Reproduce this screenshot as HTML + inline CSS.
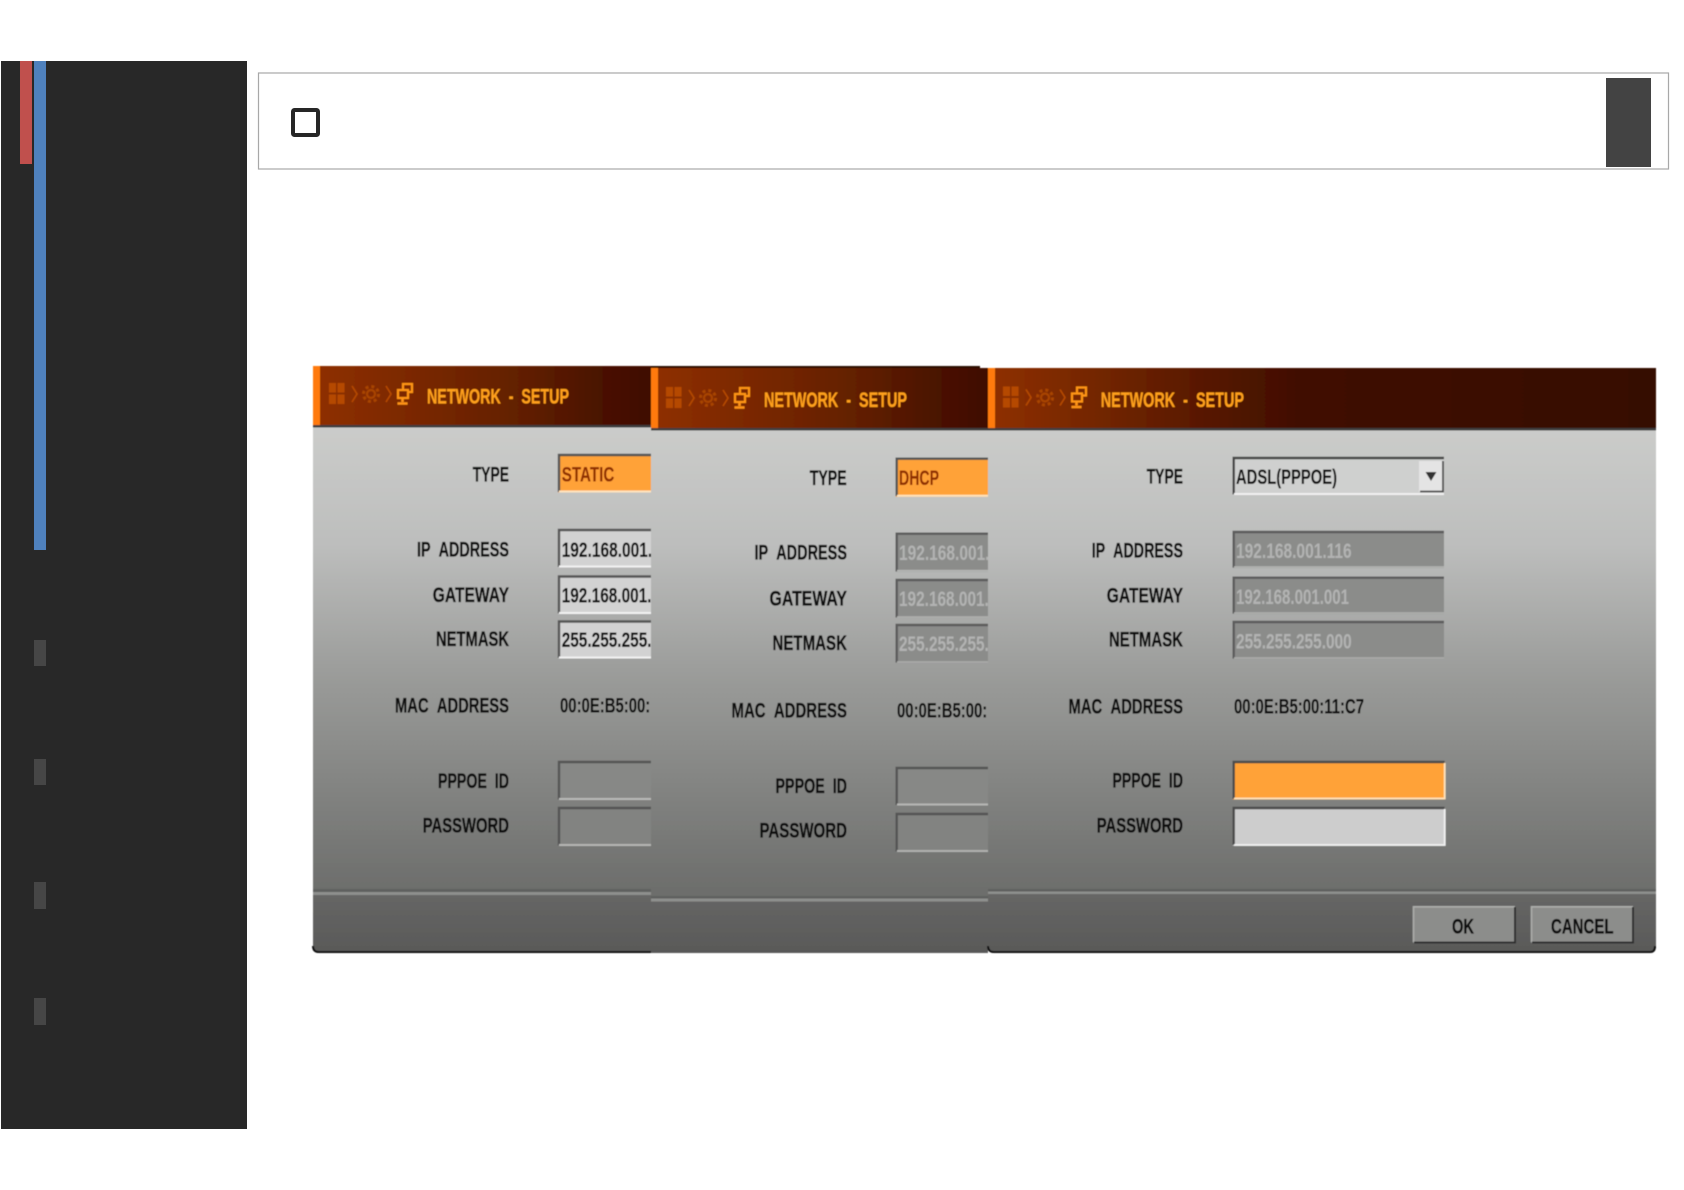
<!DOCTYPE html>
<html>
<head>
<meta charset="utf-8">
<style>
html,body{margin:0;padding:0;background:#fff;width:1684px;height:1190px;overflow:hidden}
svg{display:block;position:absolute;left:0;top:0}
text{font-family:"Liberation Sans",sans-serif;font-weight:700;font-size:21px;fill:#0c0c0c;stroke:#0c0c0c;stroke-width:.3}
.t{fill:#ffa01e;stroke:#ffa01e;stroke-width:.15}
.d{fill:#b2b3b2;stroke:none}
.v{stroke-width:.1}
.o{fill:#8f2f06;stroke:#8f2f06;stroke-width:.1}
</style>
</head>
<body>
<svg width="1684" height="1190" viewBox="0 0 1684 1190" xmlns="http://www.w3.org/2000/svg">
<defs>
<linearGradient id="h" gradientUnits="userSpaceOnUse" x1="313" y1="0" x2="651" y2="0">
<stop offset="0" stop-color="#8f3000"/><stop offset=".3" stop-color="#7a2800"/><stop offset=".6" stop-color="#632000"/><stop offset=".85" stop-color="#4a1200"/><stop offset="1" stop-color="#3f0d00"/>
</linearGradient>
<linearGradient id="h3" gradientUnits="userSpaceOnUse" x1="988" y1="0" x2="1656" y2="0">
<stop offset="0" stop-color="#8f3000"/><stop offset=".17" stop-color="#722600"/><stop offset=".32" stop-color="#581800"/><stop offset=".47" stop-color="#400e00"/><stop offset="1" stop-color="#360b00"/>
</linearGradient>
<linearGradient id="b" gradientUnits="userSpaceOnUse" x1="0" y1="428" x2="0" y2="890">
<stop offset="0" stop-color="#cbccca"/><stop offset=".25" stop-color="#bdbebd"/><stop offset=".55" stop-color="#999a98"/><stop offset="1" stop-color="#6d6e6c"/>
</linearGradient>
<linearGradient id="f" gradientUnits="userSpaceOnUse" x1="0" y1="892" x2="0" y2="953">
<stop offset="0" stop-color="#676766"/><stop offset="1" stop-color="#595958"/>
</linearGradient>
<filter id="s" x="-2%" y="-2%" width="104%" height="104%"><feGaussianBlur stdDeviation=".5"/></filter>
<g id="ic">
<g fill="#b54a04">
<rect x="329" y="383" width="7" height="9.5"/><rect x="337.5" y="383" width="7" height="9.5"/>
<rect x="329" y="394.5" width="7" height="9.5"/><rect x="337.5" y="394.5" width="7" height="9.5"/>
</g>
<path d="M352 386l5 8-5 8M386 386l5 8-5 8" fill="none" stroke="#b54a04" stroke-width="1.6"/>
<circle cx="371" cy="394" r="4" fill="none" stroke="#a84404" stroke-width="2.2"/>
<circle cx="371" cy="394" r="7.5" fill="none" stroke="#a84404" stroke-width="3" stroke-dasharray="3 2.9"/>
<g fill="none" stroke="#ff9412" stroke-width="2.2">
<rect x="403" y="384" width="9" height="8"/>
<rect x="398" y="390" width="10" height="8" fill="#7a2800"/>
</g>
<path d="M402.5 398v4M397.5 403.5h10" stroke="#ff9412" stroke-width="2.6" fill="none"/>
</g>
</defs>

<!-- sidebar -->
<rect x="1" y="61" width="246" height="1068" fill="#282828"/>
<rect x="20" y="61" width="12" height="103" fill="#c0504d"/>
<rect x="34" y="61" width="12" height="489" fill="#4f81bd"/>
<rect x="34" y="640" width="12" height="26" fill="#464646"/>
<rect x="34" y="759" width="12" height="26" fill="#464646"/>
<rect x="34" y="882" width="12" height="27" fill="#464646"/>
<rect x="34" y="998" width="12" height="27" fill="#464646"/>

<!-- top box -->
<rect x="258.5" y="73" width="1410" height="96" fill="#fff" stroke="#a8a8a8" stroke-width="1.2"/>
<rect x="293" y="110" width="25" height="25" rx="1.5" fill="#fff" stroke="#262626" stroke-width="4"/>
<rect x="1606" y="78" width="45" height="89" fill="#434343"/>

<g filter="url(#s)">
<!-- PANEL 1 -->
<path d="M313 366H651V953H319Q313 953 313 947Z" fill="url(#b)"/>
<rect x="313" y="366" width="338" height="59" fill="url(#h)"/>
<rect x="313" y="366" width="7" height="59" fill="#ff7a08"/>
<rect x="313" y="425" width="338" height="2.5" fill="#3c3c3c"/>
<use href="#ic"/>
<text class="t" x="427" y="403.5" textLength="142" lengthAdjust="spacingAndGlyphs">NETWORK&#160;&#160;-&#160;&#160;SETUP</text>
<rect x="313" y="889" width="338" height="3" fill="#5f605e"/>
<rect x="313" y="892" width="338" height="3" fill="#8e8f8d"/>
<path d="M313 895H651V951H319Q313 951 313 945Z" fill="url(#f)"/>
<path d="M313 946Q313 952 319 952H651" fill="none" stroke="#111" stroke-width="2"/>
<text x="472.7" y="481.5" textLength="36.3" lengthAdjust="spacingAndGlyphs">TYPE</text>
<text x="417" y="556.5" textLength="92" lengthAdjust="spacingAndGlyphs">IP&#160;&#160;ADDRESS</text>
<text x="432.7" y="601.8" textLength="76.3" lengthAdjust="spacingAndGlyphs">GATEWAY</text>
<text x="436" y="646.2" textLength="73" lengthAdjust="spacingAndGlyphs">NETMASK</text>
<text x="395" y="712.5" textLength="114" lengthAdjust="spacingAndGlyphs">MAC&#160;&#160;ADDRESS</text>
<text x="438" y="788.2" textLength="71" lengthAdjust="spacingAndGlyphs">PPPOE&#160;&#160;ID</text>
<text x="422.7" y="832.5" textLength="86.3" lengthAdjust="spacingAndGlyphs">PASSWORD</text>
<rect x="558" y="454" width="93" height="38.5" fill="#ffa239"/>
<path d="M559 492V455H651" fill="none" stroke="#555" stroke-width="2.4"/><path d="M559 491.5H651" stroke="#ffe4bd" stroke-width="2"/>
<text class="o" x="561.7" y="481.5" textLength="52.6" lengthAdjust="spacingAndGlyphs">STATIC</text>
<rect x="558" y="529" width="93" height="38.5" fill="#d2d2d2"/>
<path d="M559 567V530H651" fill="none" stroke="#555" stroke-width="2.4"/><path d="M559 566.5H651" stroke="#f2f2f2" stroke-width="2"/>
<rect x="558" y="575.5" width="93" height="38.5" fill="#d2d2d2"/>
<path d="M559 613.5V576.5H651" fill="none" stroke="#555" stroke-width="2.4"/><path d="M559 613H651" stroke="#f2f2f2" stroke-width="2"/>
<rect x="558" y="620.5" width="93" height="38" fill="#d2d2d2"/>
<path d="M559 658V621.5H651" fill="none" stroke="#555" stroke-width="2.4"/><path d="M559 657.5H651" stroke="#f2f2f2" stroke-width="2"/>
<text class="v" x="561.7" y="557" textLength="115.5" lengthAdjust="spacingAndGlyphs">192.168.001.116</text>
<text class="v" x="561.7" y="602.5" textLength="115.5" lengthAdjust="spacingAndGlyphs">192.168.001.001</text>
<text class="v" x="561.7" y="647" textLength="115.5" lengthAdjust="spacingAndGlyphs">255.255.255.000</text>
<text class="v" x="560" y="712.5" textLength="130" lengthAdjust="spacingAndGlyphs">00:0E:B5:00:11:C7</text>
<rect x="558" y="761" width="93" height="39" fill="#878886"/>
<path d="M559 799.5V762H651" fill="none" stroke="#555" stroke-width="2.4"/><path d="M559 799H651" stroke="#b9bab8" stroke-width="2"/>
<rect x="558" y="807" width="93" height="39" fill="#828381"/>
<path d="M559 845.5V808H651" fill="none" stroke="#555" stroke-width="2.4"/><path d="M559 845H651" stroke="#b5b6b4" stroke-width="2"/>

<!-- PANEL 2 -->
<rect x="651" y="366" width="329" height="2" fill="#2a0800"/>
<rect x="651" y="368" width="337" height="585" fill="url(#b)"/>
<g transform="translate(338 0)"><rect x="313" y="368" width="337" height="60" fill="url(#h)"/></g>
<rect x="651" y="368" width="7" height="60" fill="#ff7a08"/>
<rect x="651" y="428" width="337" height="2.5" fill="#3c3c3c"/>
<use href="#ic" transform="translate(337 4)"/>
<text class="t" x="764" y="407" textLength="143" lengthAdjust="spacingAndGlyphs">NETWORK&#160;&#160;-&#160;&#160;SETUP</text>
<rect x="651" y="896" width="337" height="2.5" fill="#5f605e"/>
<rect x="651" y="898.5" width="337" height="3" fill="#8e8f8d"/>
<rect x="651" y="901.5" width="337" height="51.5" fill="url(#f)"/>
<text x="809.7" y="485" textLength="37" lengthAdjust="spacingAndGlyphs">TYPE</text>
<text x="754.5" y="559.5" textLength="92.5" lengthAdjust="spacingAndGlyphs">IP&#160;&#160;ADDRESS</text>
<text x="769.5" y="605.5" textLength="77.5" lengthAdjust="spacingAndGlyphs">GATEWAY</text>
<text x="772.5" y="650" textLength="74.5" lengthAdjust="spacingAndGlyphs">NETMASK</text>
<text x="731.5" y="717.5" textLength="115.5" lengthAdjust="spacingAndGlyphs">MAC&#160;&#160;ADDRESS</text>
<text x="775.5" y="793" textLength="71.5" lengthAdjust="spacingAndGlyphs">PPPOE&#160;&#160;ID</text>
<text x="759.5" y="837.5" textLength="87.5" lengthAdjust="spacingAndGlyphs">PASSWORD</text>
<rect x="895.7" y="457.7" width="92.3" height="39" fill="#ffa239"/>
<path d="M896.7 496V458.7H988" fill="none" stroke="#555" stroke-width="2.4"/><path d="M897 495.7H988" stroke="#ffe4bd" stroke-width="2"/>
<text class="o" x="899" y="485" textLength="40" lengthAdjust="spacingAndGlyphs">DHCP</text>
<rect x="895.7" y="532.7" width="92.3" height="39" fill="#8b8c8a"/>
<path d="M896.7 571.5V533.7H988" fill="none" stroke="#5c5c5c" stroke-width="2.4"/><path d="M897 570.7H988" stroke="#b5b6b4" stroke-width="1.6"/>
<rect x="895.7" y="579" width="92.3" height="38.7" fill="#8b8c8a"/>
<path d="M896.7 617.5V580H988" fill="none" stroke="#5c5c5c" stroke-width="2.4"/><path d="M897 617H988" stroke="#b0b1af" stroke-width="1.6"/>
<rect x="895.7" y="624" width="92.3" height="39" fill="#8b8c8a"/>
<path d="M896.7 662.5V625H988" fill="none" stroke="#5c5c5c" stroke-width="2.4"/><path d="M897 662H988" stroke="#adaeac" stroke-width="1.6"/>
<text class="d" x="899" y="560" textLength="115.5" lengthAdjust="spacingAndGlyphs">192.168.001.116</text>
<text class="d" x="899" y="606" textLength="115.5" lengthAdjust="spacingAndGlyphs">192.168.001.001</text>
<text class="d" x="899" y="651" textLength="115.5" lengthAdjust="spacingAndGlyphs">255.255.255.000</text>
<text class="v" x="897" y="717.5" textLength="130" lengthAdjust="spacingAndGlyphs">00:0E:B5:00:11:C7</text>
<rect x="895.7" y="767" width="92.3" height="38.5" fill="#878886"/>
<path d="M896.7 805V768H988" fill="none" stroke="#555" stroke-width="2.4"/><path d="M897 804.5H988" stroke="#b5b6b4" stroke-width="2"/>
<rect x="895.7" y="813" width="92.3" height="39" fill="#828381"/>
<path d="M896.7 851.5V814H988" fill="none" stroke="#555" stroke-width="2.4"/><path d="M897 851H988" stroke="#b0b1af" stroke-width="2"/>

<!-- PANEL 3 -->
<path d="M988 368H1656V947Q1656 953 1650 953H994Q988 953 988 947Z" fill="url(#b)"/>
<rect x="988" y="368" width="668" height="60" fill="url(#h3)"/>
<rect x="988" y="368" width="7" height="60" fill="#ff7a08"/>
<rect x="988" y="428" width="668" height="2.5" fill="#3c3c3c"/>
<use href="#ic" transform="translate(674 3.5)"/>
<text class="t" x="1100.7" y="407" textLength="143.3" lengthAdjust="spacingAndGlyphs">NETWORK&#160;&#160;-&#160;&#160;SETUP</text>
<rect x="988" y="889" width="668" height="2.5" fill="#5f605e"/>
<rect x="988" y="891.5" width="668" height="2.5" fill="#8e8f8d"/>
<path d="M988 894H1656V945Q1656 951 1650 951H994Q988 951 988 945Z" fill="url(#f)"/>
<path d="M988 946Q988 952 994 952H1650Q1655 952 1655 946" fill="none" stroke="#111" stroke-width="2"/>
<text x="1146.7" y="483.5" textLength="36.3" lengthAdjust="spacingAndGlyphs">TYPE</text>
<text x="1091.7" y="557.5" textLength="91.3" lengthAdjust="spacingAndGlyphs">IP&#160;&#160;ADDRESS</text>
<text x="1106.7" y="602.5" textLength="76.3" lengthAdjust="spacingAndGlyphs">GATEWAY</text>
<text x="1109" y="646.5" textLength="74" lengthAdjust="spacingAndGlyphs">NETMASK</text>
<text x="1068.5" y="713.5" textLength="114.5" lengthAdjust="spacingAndGlyphs">MAC&#160;&#160;ADDRESS</text>
<text x="1112.5" y="787.5" textLength="70.5" lengthAdjust="spacingAndGlyphs">PPPOE&#160;&#160;ID</text>
<text x="1096.7" y="832.5" textLength="86.3" lengthAdjust="spacingAndGlyphs">PASSWORD</text>
<rect x="1232.7" y="457" width="211.3" height="38" fill="#cfd0cf"/>
<path d="M1233.7 494.5V458H1444" fill="none" stroke="#454545" stroke-width="2.4"/><path d="M1234 494H1444" stroke="#f0f0f0" stroke-width="2"/>
<rect x="1419" y="461" width="24" height="31" fill="#e4e4e4"/>
<path d="M1443 461V491.5H1420" fill="none" stroke="#4a4a4a" stroke-width="1.8"/>
<path d="M1425.5 472H1436.5L1431 481Z" fill="#333"/>
<text class="v" x="1236" y="484" textLength="101" lengthAdjust="spacingAndGlyphs">ADSL(PPPOE)</text>
<rect x="1232.7" y="531" width="211.3" height="37" fill="#8b8c8a"/>
<path d="M1233.7 567.5V532H1444" fill="none" stroke="#5c5c5c" stroke-width="2.4"/><path d="M1234 567H1444" stroke="#b5b6b4" stroke-width="1.6"/>
<rect x="1232.7" y="576.7" width="211.3" height="37.3" fill="#8b8c8a"/>
<path d="M1233.7 613.5V577.7H1444" fill="none" stroke="#5c5c5c" stroke-width="2.4"/><path d="M1234 613H1444" stroke="#b0b1af" stroke-width="1.6"/>
<rect x="1232.7" y="621" width="211.3" height="38" fill="#8b8c8a"/>
<path d="M1233.7 658.5V622H1444" fill="none" stroke="#5c5c5c" stroke-width="2.4"/><path d="M1234 658H1444" stroke="#adaeac" stroke-width="1.6"/>
<text class="d" x="1236" y="558" textLength="115.7" lengthAdjust="spacingAndGlyphs">192.168.001.116</text>
<text class="d" x="1236" y="604" textLength="113" lengthAdjust="spacingAndGlyphs">192.168.001.001</text>
<text class="d" x="1236" y="648.5" textLength="115.7" lengthAdjust="spacingAndGlyphs">255.255.255.000</text>
<text class="v" x="1234" y="713.5" textLength="130" lengthAdjust="spacingAndGlyphs">00:0E:B5:00:11:C7</text>
<rect x="1232.7" y="761" width="212" height="38.5" fill="#ffa239"/>
<path d="M1233.7 799V762H1444.7" fill="none" stroke="#4c4c4c" stroke-width="2.4"/><path d="M1234 798.5H1444.7V763" fill="none" stroke="#ffe4bd" stroke-width="1.8"/>
<rect x="1232.7" y="807" width="212" height="38.7" fill="#cdcdcd"/>
<path d="M1233.7 845V808H1444.7" fill="none" stroke="#4c4c4c" stroke-width="2.4"/><path d="M1234 845H1444.7V809" fill="none" stroke="#f2f2f2" stroke-width="1.8"/>
<rect x="1413" y="906" width="102" height="37" fill="#8c8d8b"/>
<path d="M1413.5 942V906.8H1515" fill="none" stroke="#adaeac" stroke-width="1.6"/><path d="M1414 942.5H1515V907" fill="none" stroke="#2e2e2e" stroke-width="2"/>
<text x="1452" y="933.5" textLength="22" lengthAdjust="spacingAndGlyphs">OK</text>
<rect x="1531" y="906" width="102" height="37" fill="#8c8d8b"/>
<path d="M1531.5 942V906.8H1633" fill="none" stroke="#adaeac" stroke-width="1.6"/><path d="M1532 942.5H1633V907" fill="none" stroke="#2e2e2e" stroke-width="2"/>
<text x="1551" y="933.5" textLength="62.5" lengthAdjust="spacingAndGlyphs">CANCEL</text>
</g>
</svg>
</body>
</html>
